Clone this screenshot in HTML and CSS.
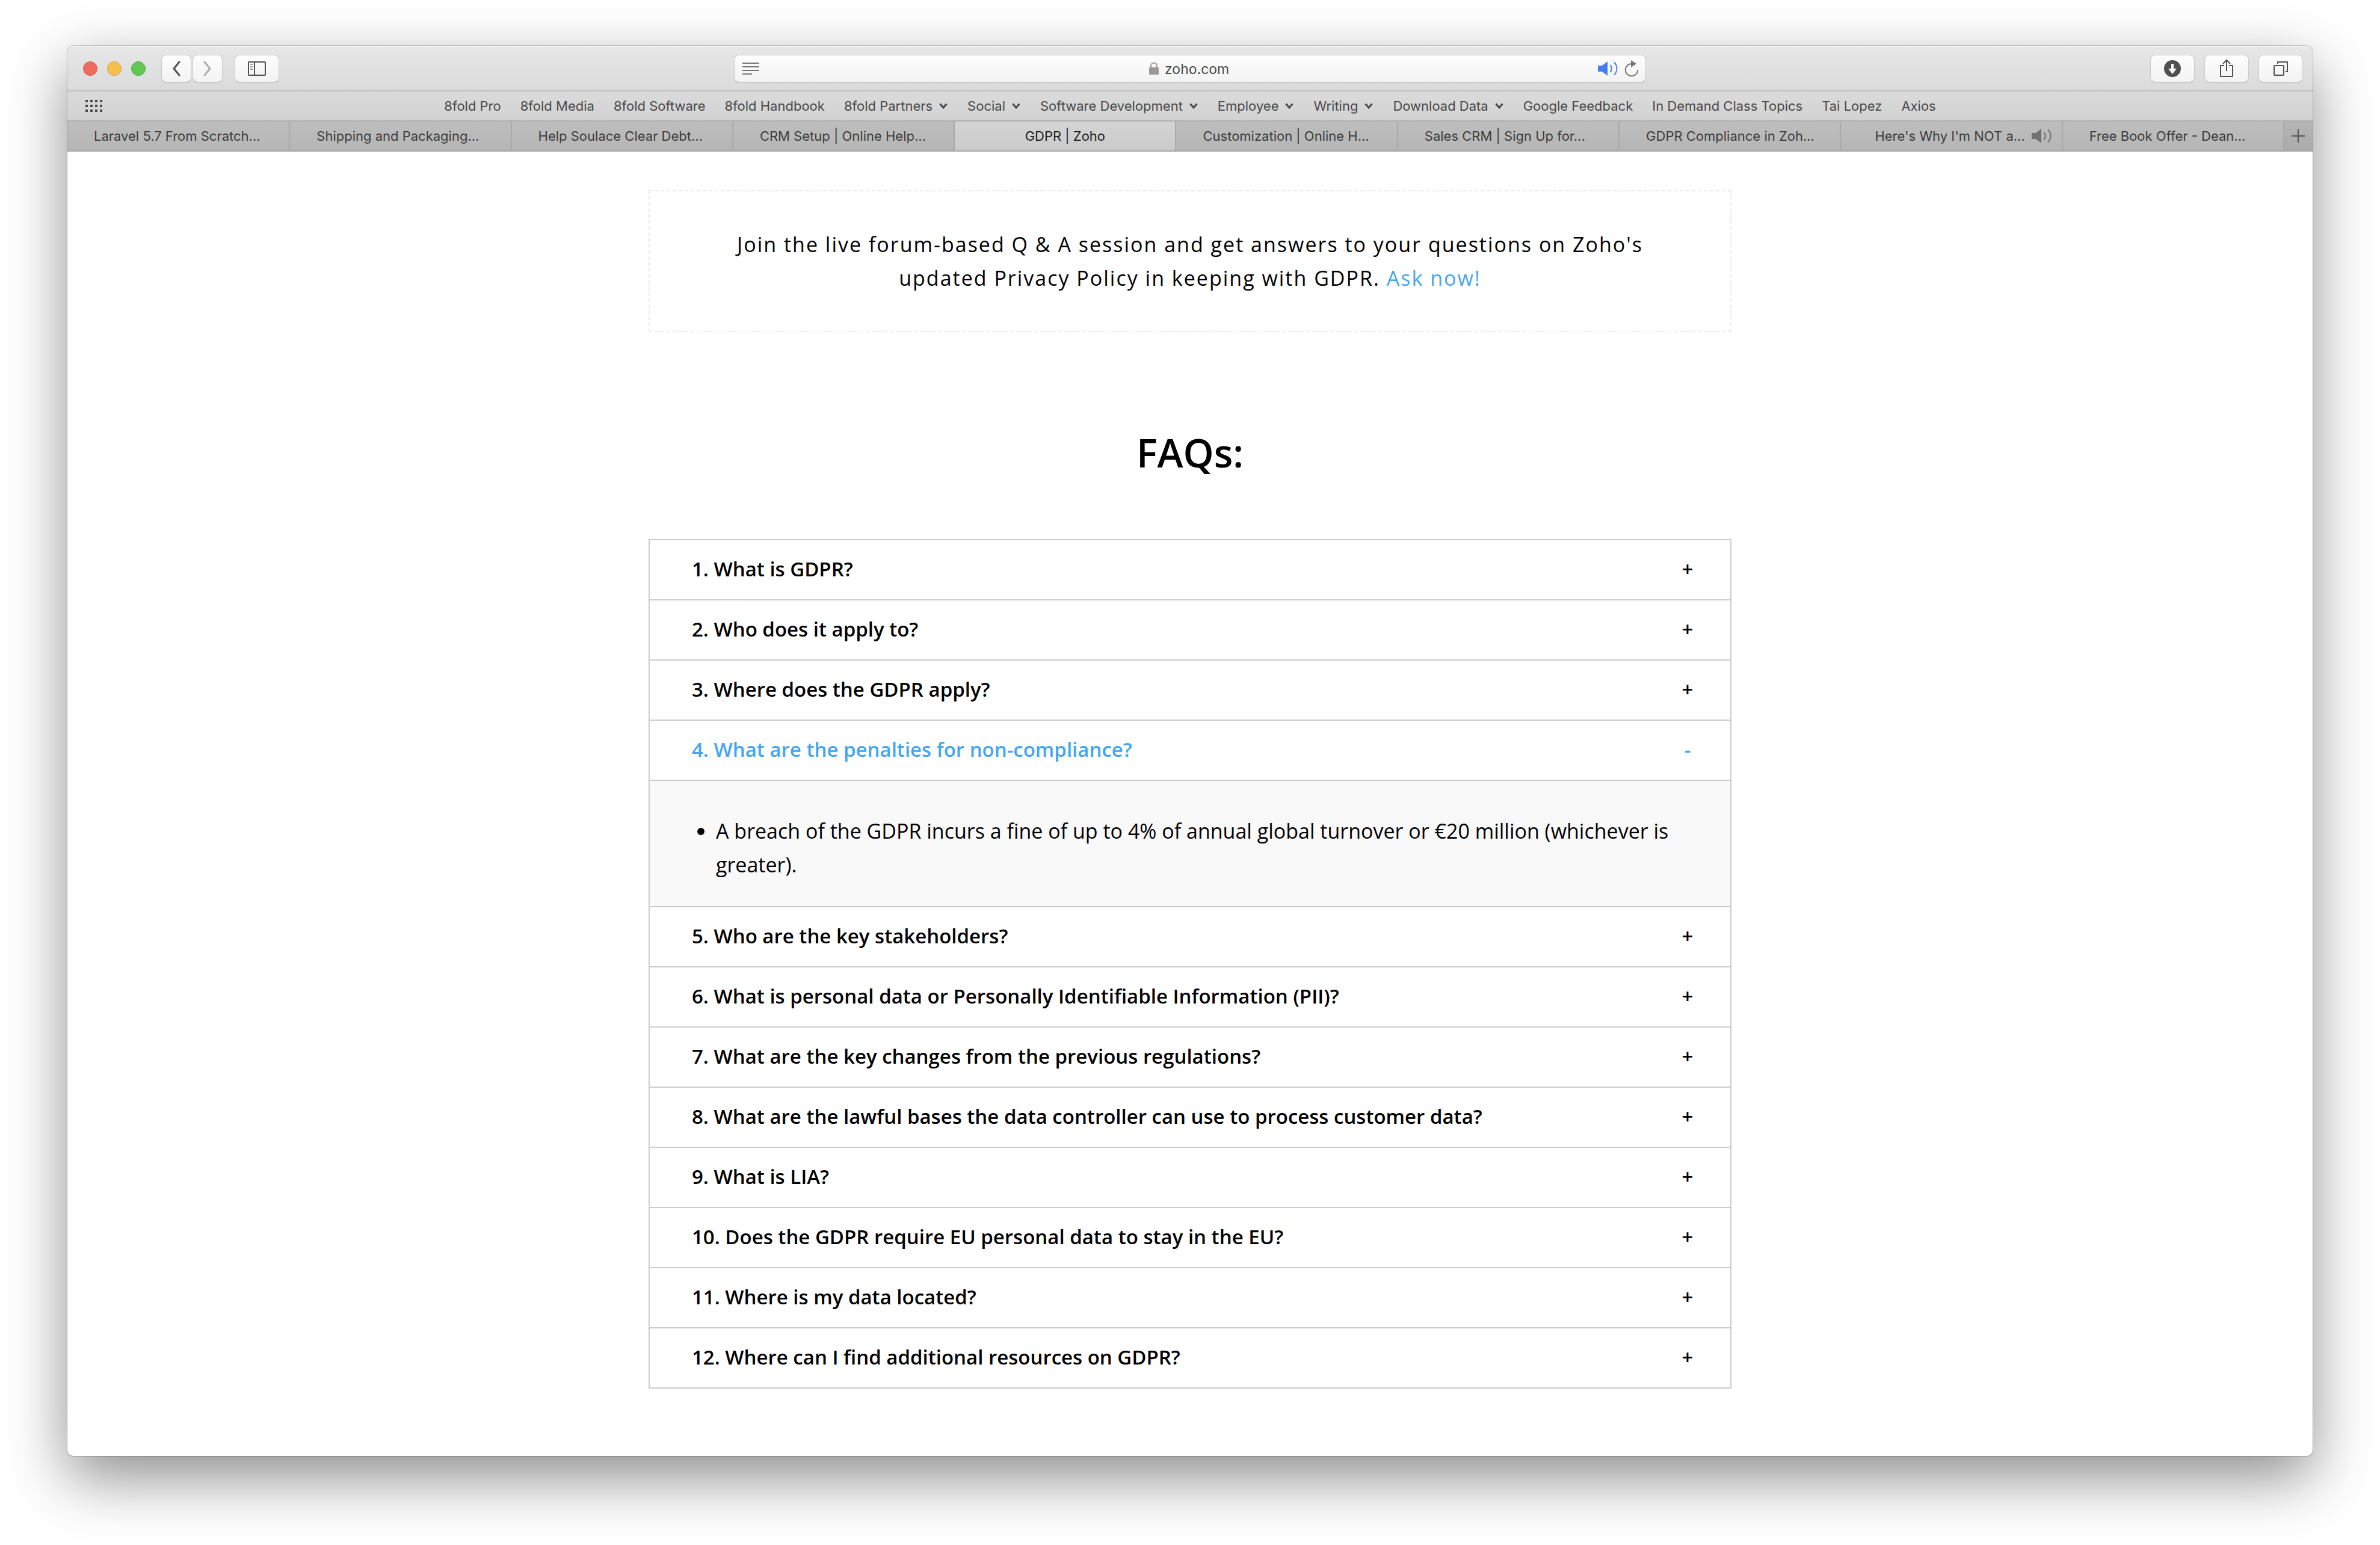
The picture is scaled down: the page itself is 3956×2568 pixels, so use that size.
FILE: index.html
```html
<!DOCTYPE html>
<html lang="en">
<head>
<meta charset="utf-8">
<title>GDPR | Zoho</title>
<link rel="stylesheet" href="styles.css">
</head>
<body>
<svg width="0" height="0" class="sprite" aria-hidden="true">
  <symbol id="chevron" viewBox="0 0 14 12"><path d="M1.500 2.500 7 9 12.500 2.500" fill="none" stroke="currentColor" stroke-width="3"/></symbol>
  <symbol id="speaker" viewBox="0 0 34 24"><path d="M0 7h7l9-7v24l-9-7H0z" fill="currentColor"/><path d="M20.500 6c3 3.500 3 8.500 0 12M27 1.500c6 6 6 15 0 21" fill="none" stroke="currentColor" stroke-width="2"/></symbol>
</svg>
<div class="window">
  <header class="chrome">
    <div class="toolbar">
      <div class="tools">
        <div class="lights">
          <button class="light light-close" aria-label="Close"></button>
          <button class="light light-min" aria-label="Minimize"></button>
          <button class="light light-full" aria-label="Full screen"></button>
        </div>
        <div class="history">
          <button class="tool tool-narrow" aria-label="Back"><svg width="14" height="26" viewBox="0 0 14 26"><path d="M12 2 3 13l9 11" fill="none" stroke="currentColor" stroke-width="3" stroke-linecap="round" stroke-linejoin="round"/></svg></button>
          <button class="tool tool-narrow tool-off" aria-label="Forward"><svg width="14" height="26" viewBox="0 0 14 26"><path d="m2 2 9 11-9 11" fill="none" stroke="currentColor" stroke-width="3" stroke-linecap="round" stroke-linejoin="round"/></svg></button>
        </div>
        <button class="tool" aria-label="Sidebar"><svg width="30" height="24" viewBox="0 0 30 24"><rect x="1" y="1" width="28" height="22" rx="1" fill="none" stroke="currentColor" stroke-width="2"/><path d="M11 1v22" stroke="currentColor" stroke-width="2"/><path d="M4 5h4M4 9h4M4 13h4" stroke="#999" stroke-width="2"/></svg></button>
      </div>
      <div class="address">
        <button class="icon-button reader" aria-label="Reader"><svg width="28" height="22" viewBox="0 0 28 22"><path d="M0 2h28M0 8h28M0 14h28M0 20h16" stroke="currentColor" stroke-width="2"/></svg></button>
        <label class="url">
          <svg width="16" height="22" viewBox="0 0 16 22" aria-hidden="true"><rect y="9" width="16" height="12" rx="1" fill="#999"/><path d="M3 10V6.500a5 5 0 0 1 10 0V10" fill="none" stroke="#999" stroke-width="2"/></svg>
          <input class="url-input" type="text" value="zoho.com" aria-label="Address">
        </label>
        <div class="address-actions">
          <button class="icon-button sound" aria-label="Mute"><svg width="34" height="24"><use href="#speaker"/></svg></button>
          <button class="icon-button" aria-label="Reload"><svg width="24" height="28" viewBox="0 0 24 28"><path d="M12 6a10.200 10.200 0 1 0 10.200 10.200" fill="none" stroke="currentColor" stroke-width="2"/><path d="M11 0v12l9-6z" fill="currentColor"/></svg></button>
        </div>
      </div>
      <div class="tools tools-end">
        <button class="tool" aria-label="Downloads"><svg width="28" height="28" viewBox="0 0 28 28"><circle cx="14" cy="14" r="14" fill="currentColor"/><path d="M12 6h4v8h5l-7 9-7-9h5z" fill="#fafafa"/></svg></button>
        <button class="tool" aria-label="Share"><svg width="24" height="32" viewBox="0 0 24 32"><path d="M8 11H2v18h20V11h-6" fill="none" stroke="currentColor" stroke-width="2" stroke-linejoin="round"/><path d="M12 20V2M6 8l6-6 6 6" fill="none" stroke="currentColor" stroke-width="2"/></svg></button>
        <button class="tool" aria-label="Show all tabs"><svg width="26" height="26" viewBox="0 0 26 26"><rect x="2" y="8" width="16" height="16" rx="1" fill="none" stroke="currentColor" stroke-width="2"/><path d="M8 5V2h16v16h-3" fill="none" stroke="currentColor" stroke-width="2" stroke-linejoin="round"/></svg></button>
      </div>
    </div>
    <nav class="favorites" aria-label="Favorites">
      <button class="icon-button grid-button" aria-label="Show favorites"><svg width="28" height="20" viewBox="0 0 28 20"><path d="M0 2h28M0 10h28M0 18h28" stroke="currentColor" stroke-width="4" stroke-dasharray="4 4"/></svg></button>
      <div class="bookmarks">
        <a class="bookmark" href="#">8fold Pro</a>
        <a class="bookmark" href="#">8fold Media</a>
        <a class="bookmark" href="#">8fold Software</a>
        <a class="bookmark" href="#">8fold Handbook</a>
        <a class="bookmark" href="#">8fold Partners <svg width="16" height="12"><use href="#chevron"/></svg></a>
        <a class="bookmark" href="#">Social <svg width="16" height="12"><use href="#chevron"/></svg></a>
        <a class="bookmark" href="#">Software Development <svg width="16" height="12"><use href="#chevron"/></svg></a>
        <a class="bookmark" href="#">Employee <svg width="16" height="12"><use href="#chevron"/></svg></a>
        <a class="bookmark" href="#">Writing <svg width="16" height="12"><use href="#chevron"/></svg></a>
        <a class="bookmark" href="#">Download Data <svg width="16" height="12"><use href="#chevron"/></svg></a>
        <a class="bookmark" href="#">Google Feedback</a>
        <a class="bookmark" href="#">In Demand Class Topics</a>
        <a class="bookmark" href="#">Tai Lopez</a>
        <a class="bookmark" href="#">Axios</a>
      </div>
    </nav>
    <nav class="tabs" aria-label="Tabs">
      <a class="tab" href="#">Laravel 5.7 From Scratch...</a>
      <a class="tab" href="#">Shipping and Packaging...</a>
      <a class="tab" href="#">Help Soulace Clear Debt...</a>
      <a class="tab" href="#">CRM Setup | Online Help...</a>
      <a class="tab tab-active" href="#" aria-current="page">GDPR | Zoho</a>
      <a class="tab" href="#">Customization | Online H...</a>
      <a class="tab" href="#">Sales CRM | Sign Up for...</a>
      <a class="tab" href="#">GDPR Compliance in Zoh...</a>
      <a class="tab tab-audible" href="#">Here's Why I'm NOT a... <svg width="34" height="24"><use href="#speaker"/></svg></a>
      <a class="tab" href="#">Free Book Offer - Dean...</a>
      <button class="tab-new" aria-label="New tab"><svg width="22" height="22" viewBox="0 0 22 22"><path d="M11 0v22M0 11h22" stroke="currentColor" stroke-width="2"/></svg></button>
    </nav>
  </header>
  <main class="page">
    <p class="notice">Join the live forum-based Q &amp; A session and get answers to your questions on Zoho's updated Privacy Policy in keeping with GDPR. <a class="notice-link" href="#">Ask now!</a></p>
    <h2 class="title">FAQs:</h2>
    <div class="faq">
      <button class="question"><span>1. What is GDPR?</span><span class="sign">+</span></button>
      <button class="question"><span>2. Who does it apply to?</span><span class="sign">+</span></button>
      <button class="question"><span>3. Where does the GDPR apply?</span><span class="sign">+</span></button>
      <button class="question question-open" aria-expanded="true"><span>4. What are the penalties for non-compliance?</span><span class="sign">-</span></button>
      <ul class="answer">
        <li>A breach of the GDPR incurs a fine of up to 4% of annual global turnover or €20 million (whichever is greater).</li>
      </ul>
      <button class="question"><span>5. Who are the key stakeholders?</span><span class="sign">+</span></button>
      <button class="question"><span>6. What is personal data or Personally Identifiable Information (PII)?</span><span class="sign">+</span></button>
      <button class="question"><span>7. What are the key changes from the previous regulations?</span><span class="sign">+</span></button>
      <button class="question"><span>8. What are the lawful bases the data controller can use to process customer data?</span><span class="sign">+</span></button>
      <button class="question"><span>9. What is LIA?</span><span class="sign">+</span></button>
      <button class="question"><span>10. Does the GDPR require EU personal data to stay in the EU?</span><span class="sign">+</span></button>
      <button class="question"><span>11. Where is my data located?</span><span class="sign">+</span></button>
      <button class="question"><span>12. Where can I find additional resources on GDPR?</span><span class="sign">+</span></button>
    </div>
  </main>
</div>
</body>
</html>
```
FILE: styles.css
```css
* {
  box-sizing: border-box;
}

body {
  display: flex;
  min-height: 100vh;
  margin: 0;
  padding: 76px 112px 148px;
  background: #fff;
  font-family: "Open Sans", "Noto Sans", sans-serif;
  color: #000;
}

button,
input {
  margin: 0;
  padding: 0;
  border: 0;
  background: none;
  font: inherit;
  color: inherit;
}

a {
  color: inherit;
  text-decoration: none;
}

svg {
  display: block;
  flex: none;
}

.sprite {
  position: absolute;
}

.window {
  flex: 1;
  min-width: 0;
  overflow: hidden;
  border-radius: 10px;
  background: #fff;
  box-shadow: 0 0 0 1px rgba(0, 0, 0, 0.2), 0 36px 100px rgba(0, 0, 0, 0.45);
}

/* Browser chrome */

.chrome {
  font-family: Inter, "Liberation Sans", sans-serif;
  font-size: 22px;
  line-height: 28px;
  color: #484848;
}

.toolbar {
  display: grid;
  grid-template-columns: 1fr minmax(0, 1516px) 1fr;
  padding: 15px 16px 13px 26px;
  border-bottom: 2px solid #c0c0c0;
  background: linear-gradient(#e7e7e7, #dbdbdb);
  box-shadow: inset 0 2px #f4f4f4;
}

.tools {
  display: flex;
  align-items: center;
  gap: 20px;
}

.tools-end {
  justify-content: flex-end;
  gap: 16px;
}

.lights {
  display: flex;
  gap: 16px;
  margin-right: 6px;
}

.light {
  width: 24px;
  height: 24px;
  border: 1px solid;
  border-radius: 50%;
}

.light-close {
  border-color: #d65a50;
  background: #ee6b60;
}

.light-min {
  border-color: #dba33c;
  background: #f5bf4f;
}

.light-full {
  border-color: #4dab3f;
  background: #61c654;
}

.history {
  display: flex;
  gap: 2px;
}

.tool {
  display: flex;
  align-items: center;
  justify-content: center;
  width: 74px;
  height: 46px;
  border: 1px solid #cacaca;
  border-bottom-color: #aaa;
  border-radius: 8px;
  background: linear-gradient(#fdfdfd, #f3f3f3);
  color: #505050;
}

.tool-narrow {
  width: 50px;
}

.tool-off {
  color: #aeaeae;
}

.address {
  display: grid;
  grid-template-columns: 1fr auto 1fr;
  align-items: center;
  height: 46px;
  margin-left: -5px;
  margin-right: 5px;
  padding: 0 11px 0 13px;
  border: 1px solid #cacaca;
  border-bottom-color: #aaa;
  border-radius: 8px;
  background: linear-gradient(#fdfdfd, #f3f3f3);
}

.icon-button {
  display: flex;
  align-items: center;
  color: #777;
}

.url {
  display: flex;
  align-items: center;
  gap: 10px;
}

.url-input {
  width: 112px;
  padding-top: 2px;
  font-size: 23px;
}

.address-actions {
  display: flex;
  align-items: center;
  justify-content: flex-end;
  gap: 10px;
}

.sound {
  color: #437ef0;
}

.favorites {
  display: grid;
  grid-template-columns: 1fr auto 1fr;
  align-items: center;
  height: 50px;
  padding: 0 30px;
  border-bottom: 2px solid #b0b0b0;
  background: linear-gradient(#dbdbdb, #d2d2d2);
}

.grid-button {
  color: #484848;
}

.bookmarks {
  display: flex;
  gap: 32px;
  white-space: nowrap;
}

.bookmark {
  display: flex;
  align-items: center;
  gap: 10px;
}

.tabs {
  display: grid;
  grid-template-columns: repeat(10, minmax(0, 1fr)) 49px;
  height: 50px;
  border-bottom: 2px solid #a6a6a6;
  background: linear-gradient(#bebebe, #b5b5b5);
  color: #3c3c3c;
}

.tab {
  display: flex;
  align-items: center;
  padding-left: 44px;
  white-space: nowrap;
}

.tab + .tab,
.tab-new {
  border-left: 2px solid #a9a9a9;
}

.tab-active {
  justify-content: center;
  padding-left: 0;
  background: linear-gradient(#d4d4d4, #cacaca);
  color: #1c1c1c;
}

.tab-audible {
  justify-content: space-between;
  padding-left: 56px;
  padding-right: 16px;
}

.tab-audible svg {
  color: #707070;
}

.tab-new {
  display: flex;
  align-items: center;
  justify-content: center;
  background: linear-gradient(#b4b4b4, #ababab);
  color: #555;
}

/* Page */

.page {
  max-width: 1800px;
  margin: 0 auto;
  padding: 64px 0;
  font-size: 34px;
  line-height: 56px;
}

.notice {
  margin: 0;
  padding: 60px 140px;
  border: 2px dashed #ebebeb;
  font-weight: 500;
  letter-spacing: 2px;
  text-align: center;
}

.notice-link {
  color: #45a6ef;
}

.title {
  margin: 160px 0 104px;
  font-size: 65px;
  font-weight: 600;
  line-height: 80px;
  text-align: center;
}

.faq {
  border: 2px solid #ccc;
  border-bottom: 0;
}

.question {
  display: flex;
  justify-content: space-between;
  width: 100%;
  padding: 24px 60px 26px 70px;
  border-bottom: 2px solid #ccc;
  font-size: 33px;
  font-weight: 600;
  line-height: 48px;
  text-align: left;
}

.question-open {
  color: #45a6ef;
}

.sign {
  width: 22px;
  text-align: center;
}

.answer {
  margin: 0;
  padding: 55px 40px 41px 110px;
  border-bottom: 2px solid #ccc;
  background: #f9f9f9;
}
```
